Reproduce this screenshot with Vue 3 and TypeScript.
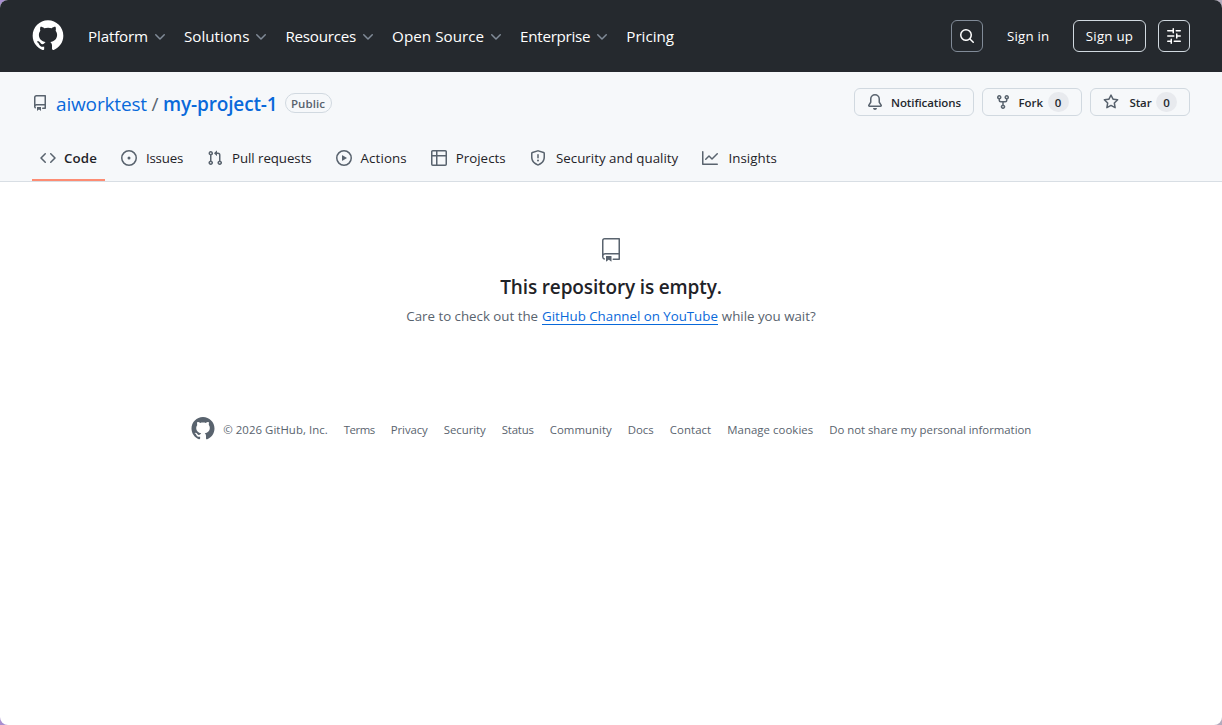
<script setup lang="ts">
import { h, type FunctionalComponent } from 'vue'

const icons: Record<string, string> = {
  repo: 'M2 2.5A2.5 2.5 0 0 1 4.5 0h8.75a.75.75 0 0 1 .75.75v12.5a.75.75 0 0 1-.75.75h-2.5a.75.75 0 0 1 0-1.5h1.75v-2h-8a1 1 0 0 0-.714 1.7.75.75 0 1 1-1.072 1.05A2.495 2.495 0 0 1 2 11.5Zm10.5-1h-8a1 1 0 0 0-1 1v6.708A2.486 2.486 0 0 1 4.5 9h8ZM5 12.25a.25.25 0 0 1 .25-.25h3.5a.25.25 0 0 1 .25.25v3.25a.25.25 0 0 1-.4.2l-1.45-1.087a.249.249 0 0 0-.3 0L5.4 15.7a.25.25 0 0 1-.4-.2Z',
  code: 'm11.28 3.22 4.25 4.25a.75.75 0 0 1 0 1.06l-4.25 4.25a.749.749 0 0 1-1.275-.326.749.749 0 0 1 .215-.734L13.94 8l-3.72-3.72a.749.749 0 0 1 .326-1.275.749.749 0 0 1 .734.215Zm-6.56 0a.751.751 0 0 1 1.042.018.751.751 0 0 1 .018 1.042L2.06 8l3.72 3.72a.749.749 0 0 1-.326 1.275.749.749 0 0 1-.734-.215L.47 8.53a.75.75 0 0 1 0-1.06Z',
  issue: 'M8 9.5a1.5 1.5 0 1 0 0-3 1.5 1.5 0 0 0 0 3ZM8 0a8 8 0 1 1 0 16A8 8 0 0 1 8 0ZM1.5 8a6.5 6.5 0 1 0 13 0 6.5 6.5 0 0 0-13 0Z',
  pull: 'M1.5 3.25a2.25 2.25 0 1 1 3 2.122v5.256a2.251 2.251 0 1 1-1.5 0V5.372A2.25 2.25 0 0 1 1.5 3.25Zm5.677-.177L9.573.677A.25.25 0 0 1 10 .854V2.5h1A2.5 2.5 0 0 1 13.5 5v5.628a2.251 2.251 0 1 1-1.5 0V5a1 1 0 0 0-1-1h-1v1.646a.25.25 0 0 1-.427.177L7.177 3.427a.25.25 0 0 1 0-.354ZM3.75 2.5a.75.75 0 1 0 0 1.5.75.75 0 0 0 0-1.5Zm0 9.5a.75.75 0 1 0 0 1.5.75.75 0 0 0 0-1.5Zm8.25.75a.75.75 0 1 0 1.5 0 .75.75 0 0 0-1.5 0Z',
  play: 'M8 0a8 8 0 1 1 0 16A8 8 0 0 1 8 0ZM1.5 8a6.5 6.5 0 1 0 13 0 6.5 6.5 0 0 0-13 0Zm4.879-2.773 4.264 2.559a.25.25 0 0 1 0 .428l-4.264 2.559A.25.25 0 0 1 6 10.559V5.442a.25.25 0 0 1 .379-.215Z',
  table: 'M0 1.75C0 .784.784 0 1.75 0h12.5C15.216 0 16 .784 16 1.75v12.5A1.75 1.75 0 0 1 14.25 16H1.75A1.75 1.75 0 0 1 0 14.25ZM6.5 6.5v8h7.75a.25.25 0 0 0 .25-.25V6.5Zm8-1.5V1.75a.25.25 0 0 0-.25-.25H6.5V5Zm-13 1.5v7.75c0 .138.112.25.25.25H5v-8ZM5 5V1.5H1.75a.25.25 0 0 0-.25.25V5Z',
  shield: 'M7.467.133a1.748 1.748 0 0 1 1.066 0l5.25 1.68A1.75 1.75 0 0 1 15 3.48V7c0 1.566-.32 3.182-1.303 4.682-.983 1.498-2.585 2.813-5.032 3.855a1.697 1.697 0 0 1-1.33 0c-2.447-1.042-4.049-2.357-5.032-3.855C1.32 10.182 1 8.566 1 7V3.48a1.75 1.75 0 0 1 1.217-1.667Zm.61 1.429a.25.25 0 0 0-.153 0l-5.25 1.68a.25.25 0 0 0-.174.238V7c0 1.358.275 2.666 1.057 3.86.784 1.194 2.121 2.34 4.366 3.297a.196.196 0 0 0 .154 0c2.245-.956 3.582-2.104 4.366-3.298C13.225 9.666 13.5 8.36 13.5 7V3.48a.251.251 0 0 0-.174-.237l-5.25-1.68ZM8.75 4.75v3a.75.75 0 0 1-1.5 0v-3a.75.75 0 0 1 1.5 0ZM9 10.5a1 1 0 1 1-2 0 1 1 0 0 1 2 0Z',
  graph: 'M1.5 1.75V13.5h13.75a.75.75 0 0 1 0 1.5H.75a.75.75 0 0 1-.75-.75V1.75a.75.75 0 0 1 1.5 0Zm14.28 2.53-5.25 5.25a.75.75 0 0 1-1.06 0L7 7.06 4.28 9.78a.751.751 0 0 1-1.042-.018.751.751 0 0 1-.018-1.042l3.25-3.25a.75.75 0 0 1 1.06 0L10 7.94l4.72-4.72a.751.751 0 0 1 1.042.018.751.751 0 0 1 .018 1.042Z',
  bell: 'M8 16a2 2 0 0 0 1.985-1.75c.017-.137-.097-.25-.235-.25h-3.5c-.138 0-.252.113-.235.25A2 2 0 0 0 8 16ZM3 5a5 5 0 0 1 10 0v2.947c0 .05.015.098.042.139l1.703 2.555A1.519 1.519 0 0 1 13.482 13H2.518a1.516 1.516 0 0 1-1.263-2.36l1.703-2.554A.255.255 0 0 0 3 7.947Zm5-3.5A3.5 3.5 0 0 0 4.5 5v2.947c0 .346-.102.683-.294.97l-1.703 2.556a.017.017 0 0 0-.003.01l.001.006c0 .002.002.004.004.006l.006.004.007.001h10.964l.007-.001.006-.004.004-.006.001-.007a.017.017 0 0 0-.003-.01l-1.703-2.554a1.745 1.745 0 0 1-.294-.97V5A3.5 3.5 0 0 0 8 1.5Z',
  fork: 'M5 5.372v.878c0 .414.336.75.75.75h4.5a.75.75 0 0 0 .75-.75v-.878a2.25 2.25 0 1 1 1.5 0v.878a2.25 2.25 0 0 1-2.25 2.25h-1.5v2.128a2.251 2.251 0 1 1-1.5 0V8.5h-1.5A2.25 2.25 0 0 1 3.5 6.25v-.878a2.25 2.25 0 1 1 1.5 0ZM5 3.25a.75.75 0 1 0-1.5 0 .75.75 0 0 0 1.5 0Zm6.75.75a.75.75 0 1 0 0-1.5.75.75 0 0 0 0 1.5Zm-3 8.75a.75.75 0 1 0-1.5 0 .75.75 0 0 0 1.5 0Z',
  star: 'M8 .25a.75.75 0 0 1 .673.418l1.882 3.815 4.21.612a.75.75 0 0 1 .416 1.279l-3.046 2.97.719 4.192a.751.751 0 0 1-1.088.791L8 12.347l-3.766 1.98a.75.75 0 0 1-1.088-.79l.72-4.194L.818 6.374a.75.75 0 0 1 .416-1.28l4.21-.611L7.327.668A.75.75 0 0 1 8 .25Zm0 2.445L6.615 5.5a.75.75 0 0 1-.564.41l-3.097.45 2.24 2.184a.75.75 0 0 1 .216.664l-.528 3.084 2.769-1.456a.75.75 0 0 1 .698 0l2.77 1.456-.53-3.084a.75.75 0 0 1 .216-.664l2.24-2.183-3.096-.45a.75.75 0 0 1-.564-.41L8 2.694Z',
  search: 'M10.68 11.74a6 6 0 0 1-7.922-8.982 6 6 0 0 1 8.982 7.922l3.04 3.04a.749.749 0 0 1-.326 1.275.749.749 0 0 1-.734-.215ZM11.5 7a4.499 4.499 0 1 0-8.997 0A4.499 4.499 0 0 0 11.5 7Z',
  sliders: 'M15 2.75a.75.75 0 0 1-.75.75h-4a.75.75 0 0 1 0-1.5h4a.75.75 0 0 1 .75.75Zm-8.5.75v1.25a.75.75 0 0 0 1.5 0v-4a.75.75 0 0 0-1.5 0V2H1.75a.75.75 0 0 0 0 1.5H6.5Zm1.25 5.25a.75.75 0 0 0 0-1.5h-6a.75.75 0 0 0 0 1.5h6ZM15 8a.75.75 0 0 1-.75.75H11.5V10a.75.75 0 1 1-1.5 0V6a.75.75 0 0 1 1.5 0v1.25h2.75A.75.75 0 0 1 15 8Zm-9 5.25v-2a.75.75 0 0 0-1.5 0v1.25H1.75a.75.75 0 0 0 0 1.5H4.5v1.25a.75.75 0 0 0 1.5 0v-2Zm9 0a.75.75 0 0 1-.75.75h-6a.75.75 0 0 1 0-1.5h6a.75.75 0 0 1 .75.75Z',
  chevron: 'M12.78 5.22a.749.749 0 0 1 0 1.06l-4.25 4.25a.75.75 0 0 1-1.06 0L3.22 6.28a.749.749 0 1 1 1.06-1.06L8 8.939l3.72-3.719a.749.749 0 0 1 1.06 0Z',
  mark24: 'M10.226 17.284c-2.965-.36-5.054-2.493-5.054-5.256 0-1.123.404-2.336 1.078-3.144-.292-.741-.247-2.314.09-2.965.898-.112 2.111.36 2.83 1.01.853-.269 1.752-.404 2.853-.404 1.1 0 1.999.135 2.807.382.696-.629 1.932-1.1 2.83-.988.315.606.36 2.179.067 2.942.72.854 1.101 2 1.101 3.167 0 2.763-2.089 4.852-5.098 5.234.763.494 1.28 1.572 1.28 2.807v2.336c0 .674.561 1.056 1.235.786 4.066-1.55 7.255-5.615 7.255-10.646C23.5 6.188 18.334 1 11.978 1 5.62 1 .5 6.188.5 12.545c0 4.986 3.167 9.12 7.435 10.669.606.225 1.19-.18 1.19-.786V20.63a2.9 2.9 0 0 1-1.078.224c-1.483 0-2.359-.808-2.987-2.313-.247-.607-.517-.966-1.034-1.033-.27-.023-.359-.135-.359-.27 0-.27.45-.471.898-.471.652 0 1.213.404 1.797 1.235.45.651.921.943 1.483.943.561 0 .92-.202 1.437-.719.382-.381.674-.718.944-.943',
  repo24: 'M3 2.75A2.75 2.75 0 0 1 5.75 0h14.5a.75.75 0 0 1 .75.75v20.5a.75.75 0 0 1-.75.75h-6a.75.75 0 0 1 0-1.5h5.25v-4H6A1.5 1.5 0 0 0 4.5 18v.75c0 .716.43 1.334 1.05 1.605a.75.75 0 0 1-.6 1.374A3.251 3.251 0 0 1 3 18.75ZM19.5 1.5H5.75c-.69 0-1.25.56-1.25 1.25v12.651A2.989 2.989 0 0 1 6 15h13.5ZM7 18.25a.25.25 0 0 1 .25-.25h5a.25.25 0 0 1 .25.25v5.01a.25.25 0 0 1-.397.201l-2.206-1.604a.25.25 0 0 0-.294 0L7.397 23.46a.25.25 0 0 1-.397-.2v-5.01Z',
}

const Icon: FunctionalComponent<{ name: string; size?: number }> = (props) => {
  const size = props.size ?? 16
  const box = props.name.endsWith('24') ? 24 : 16
  return h('svg', { class: 'icon', width: size, height: size, viewBox: `0 0 ${box} ${box}`, fill: 'currentColor' }, [
    h('path', { d: icons[props.name] }),
  ])
}
Icon.props = ['name', 'size']

// Tracks a label so that it occupies the given advance width.
const vFit = {
  mounted(el: HTMLElement, binding: { value: number }) {
    const count = (el.textContent ?? '').trim().length
    const natural = el.getBoundingClientRect().width
    el.style.letterSpacing = `${((binding.value - natural) / count).toFixed(4)}px`
  },
}

interface Label { label: string; width: number }
const menu: (Label & { plain?: boolean })[] = [
  { label: 'Platform', width: 60 },
  { label: 'Solutions', width: 65.4 },
  { label: 'Resources', width: 70.7 },
  { label: 'Open Source', width: 92 },
  { label: 'Enterprise', width: 70.2 },
  { label: 'Pricing', width: 47.7, plain: true },
]
const tabs: (Label & { icon: string })[] = [
  { label: 'Code', width: 33, icon: 'code' },
  { label: 'Issues', width: 37, icon: 'issue' },
  { label: 'Pull requests', width: 79.6, icon: 'pull' },
  { label: 'Actions', width: 46.1, icon: 'play' },
  { label: 'Projects', width: 50, icon: 'table' },
  { label: 'Security and quality', width: 122.3, icon: 'shield' },
  { label: 'Insights', width: 48.2, icon: 'graph' },
]
const footerLinks: Label[] = [
  { label: 'Terms', width: 31 },
  { label: 'Privacy', width: 37 },
  { label: 'Security', width: 42 },
  { label: 'Status', width: 32 },
  { label: 'Community', width: 62 },
  { label: 'Docs', width: 26 },
  { label: 'Contact', width: 41.5 },
  { label: 'Manage cookies', width: 86 },
  { label: 'Do not share my personal information', width: 202 },
]
</script>

<template>
  <div class="desktop">
    <div class="window">
      <header class="topbar">
        <a class="logo"><Icon name="mark24" :size="32" /></a>
        <nav class="menu">
          <a v-for="m in menu" :key="m.label" class="menu-item">
            <span v-fit="m.width" class="t">{{ m.label }}</span>
            <Icon v-if="!m.plain" name="chevron" />
          </a>
        </nav>
        <div class="account">
          <button class="square search"><Icon name="search" /></button>
          <a class="signin"><span v-fit="42.5" class="t">Sign in</span></a>
          <a class="signup"><span v-fit="47.5" class="t">Sign up</span></a>
          <button class="square"><Icon name="sliders" /></button>
        </div>
      </header>

      <section class="repo-head">
        <div class="title-row">
          <Icon name="repo" />
          <div class="crumbs">
            <a class="owner"><span v-fit="91" class="t">aiworktest</span></a>
            <span class="slash">/</span>
            <a class="name"><span v-fit="114.5" class="t">my-project-1</span></a>
          </div>
          <span class="badge"><span v-fit="34" class="t">Public</span></span>
          <div class="actions">
            <a class="btn wide"><Icon name="bell" /><span v-fit="70" class="t">Notifications</span></a>
            <a class="btn"><Icon name="fork" class="fork" /><span v-fit="24.5" class="t">Fork</span><span class="count">0</span></a>
            <a class="btn"><Icon name="star" class="star" /><span v-fit="22" class="t">Star</span><span class="count">0</span></a>
          </div>
        </div>
        <nav class="tabs">
          <a v-for="(t, i) in tabs" :key="t.label" class="tab" :class="{ active: i === 0, spaced: i > 4 }">
            <Icon :name="t.icon" />
            <span v-fit="t.width" class="t">{{ t.label }}</span>
          </a>
        </nav>
      </section>

      <main class="blank">
        <Icon name="repo24" :size="24" />
        <h3><span v-fit="221.5" class="t">This repository is empty.</span></h3>
        <p>
          <span v-fit="131.7" class="t">Care to check out the</span>
          <a><span v-fit="175.8" class="t">GitHub Channel on YouTube</span></a>
          <span v-fit="93.8" class="t">while you wait?</span>
        </p>
      </main>

      <footer class="footer">
        <Icon name="mark24" :size="24" />
        <span v-fit="104.5" class="t copy">© 2026 GitHub, Inc.</span>
        <a v-for="f in footerLinks" :key="f.label"><span v-fit="f.width" class="t">{{ f.label }}</span></a>
      </footer>
    </div>
  </div>
</template>

<style>
html,
body {
  margin: 0;
  background: #fff;
}
</style>

<style scoped>
.desktop {
  height: 725px;
  overflow: hidden;
  background: linear-gradient(90deg, #a98fd0, #b3abbd);
  font-family: 'Open Sans', 'Noto Sans', sans-serif;
  color: #1f2328;
}
.window {
  height: 725px;
  overflow: hidden;
  border-radius: 8px;
  background: #fff;
}
.icon {
  display: block;
  flex: none;
}
.t {
  display: inline-block;
  white-space: nowrap;
}
button {
  font: inherit;
  padding: 0;
  background: none;
}
.topbar {
  box-sizing: border-box;
  height: 72px;
  padding: 0 32px;
  display: flex;
  align-items: center;
  background: #25292e;
  color: #fff;
}
.logo {
  margin: -2px 24px 0 0;
}
.menu {
  display: flex;
  gap: 16px;
  font-size: 15.2px;
  line-height: 24px;
}
.menu-item {
  display: flex;
  align-items: center;
  gap: 4px;
}
.menu-item .icon {
  color: #818b98;
  margin-top: 2px;
}
.account {
  margin-left: auto;
  display: flex;
  align-items: center;
  font-size: 13.3px;
  line-height: 20px;
}
.square {
  box-sizing: border-box;
  width: 32px;
  height: 32px;
  display: flex;
  align-items: center;
  justify-content: center;
  border: 1px solid #d1d9e0;
  border-radius: 6px;
  color: #fff;
}
.search {
  border-color: #818b98;
}
.signin {
  margin: 0 23.5px 0 24px;
}
.signup {
  box-sizing: border-box;
  width: 73px;
  height: 32px;
  margin-right: 12px;
  display: flex;
  align-items: center;
  justify-content: center;
  border: 1px solid #d1d9e0;
  border-radius: 6px;
}
.repo-head {
  box-sizing: border-box;
  height: 110px;
  padding: 16px 32px 0;
  background: #f6f8fa;
  border-bottom: 1px solid #d8dee4;
}
.title-row {
  height: 32px;
  display: flex;
  align-items: center;
  color: #59636e;
}
.title-row > .icon {
  margin: -2px 8px 0 0;
}
.crumbs {
  display: flex;
  font-size: 19px;
  line-height: 30px;
}
.owner,
.name {
  color: #0969da;
}
.name {
  font-weight: 600;
}
.slash {
  width: 16px;
  text-align: center;
}
.badge {
  box-sizing: border-box;
  width: 47px;
  height: 20px;
  margin: -2px 0 0 7px;
  display: flex;
  align-items: center;
  justify-content: center;
  border: 1px solid #d1d9e0;
  border-radius: 10px;
  font-size: 11.5px;
  font-weight: 600;
  line-height: 18px;
}
.badge .t {
  padding-top: 1px;
}
.actions {
  margin: -4px 0 0 auto;
  display: flex;
  gap: 8px;
}
.btn {
  box-sizing: border-box;
  width: 100px;
  height: 28px;
  padding: 0 12px;
  display: flex;
  align-items: center;
  border: 1px solid #d1d9e0;
  border-radius: 6px;
  font-size: 11.5px;
  font-weight: 600;
  line-height: 20px;
  color: #25292e;
}
.btn.wide {
  width: 120px;
}
.btn .t {
  padding-top: 2px;
}
.btn .icon {
  color: #59636e;
  margin-right: 8px;
}
.btn .fork {
  margin-right: 7.5px;
}
.btn .star {
  margin-right: 10.5px;
}
.count {
  width: 21px;
  height: 20px;
  margin-left: 4.5px;
  border-radius: 10px;
  background: #e8eaee;
  text-align: center;
  line-height: 22px;
}
.tabs {
  display: flex;
  gap: 8px;
  margin-top: 13px;
}
.tab {
  box-sizing: border-box;
  height: 48px;
  padding: 0 8px 13px;
  display: flex;
  align-items: flex-end;
  gap: 9px;
  font-size: 13.3px;
  line-height: 20px;
}
.tab .icon {
  color: #59636e;
  margin-bottom: 2px;
}
.tab.spaced {
  gap: 10.3px;
}
.tab.active {
  gap: 8px;
  font-weight: 600;
  border-bottom: 2px solid #fd8c73;
  padding-bottom: 11px;
}
.blank {
  height: 222px;
  box-sizing: border-box;
  padding-top: 56px;
  display: flex;
  flex-direction: column;
  align-items: center;
  color: #59636e;
}
.blank h3 {
  margin: 10px 0 0;
  font-size: 19px;
  font-weight: 600;
  line-height: 30px;
  color: #1f2328;
}
.blank p {
  margin: 4px 0 0;
  display: flex;
  gap: 4px;
  font-size: 13.3px;
  line-height: 20px;
}
.blank a {
  height: 18px;
  color: #0969da;
  border-bottom: 1px solid #0969da;
}
.footer {
  margin-top: 12px;
  display: flex;
  align-items: center;
  justify-content: center;
  gap: 16px;
  font-size: 11.4px;
  line-height: 18px;
  color: #59636e;
}
.footer .t {
  padding-top: 4px;
}
.copy {
  margin-left: -7.5px;
}
</style>
